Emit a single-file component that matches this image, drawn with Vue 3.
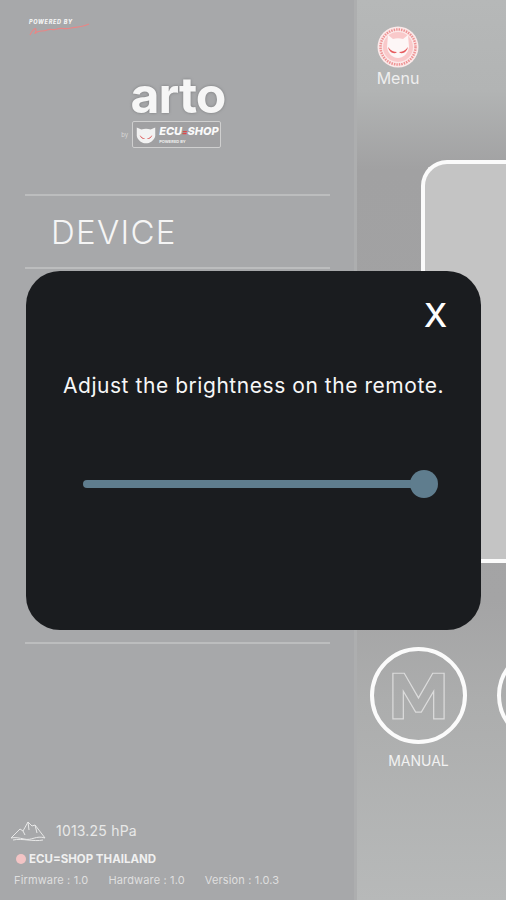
<script setup>
import { ref } from 'vue'

const brightness = ref(100)
const versions = [
  { label: 'Firmware', value: '1.0' },
  { label: 'Hardware', value: '1.0' },
  { label: 'Version', value: '1.0.3' }
]
</script>

<template>
  <div class="screen">
    <aside class="sidebar">
      <div class="powered">
        <span class="powered-text">POWERED BY</span>
        <svg class="signature" width="62" height="14" viewBox="0 0 62 14">
          <path d="M1 12 C4 6 7 4 7 7 C7 10 4 12 8 9 C12 7 14 9 18 7 C22 5 24 8 28 6 C32 4 36 7 42 5 C48 4 54 4 60 1" fill="none" stroke="#e88686" stroke-width="1.2" />
        </svg>
      </div>

      <div class="brand">
        <div class="arto">arto</div>
        <div class="shop-row">
          <span class="by">by</span>
          <div class="shop-logo">
            <svg width="24" height="21" viewBox="0 0 26 21">
              <path d="M3 3 L8 5 C11 4 15 4 18 5 L23 3 L23 12 C22 17 17 20 13 20 C9 20 4 17 3 12 Z" fill="#f2f2f2" />
              <path d="M6 11 C9 14 11 15 12 15 C10 16 7 14 6 11 Z M20 11 C17 14 15 15 14 15 C16 16 19 14 20 11 Z" fill="#d94b4b" />
            </svg>
            <div class="shop-words">
              <span class="shop-name">ECU<i>=</i>SHOP</span>
              <span class="shop-sub">POWERED BY</span>
            </div>
          </div>
        </div>
      </div>

      <nav class="menu-list">
        <div class="menu-row">DEVICE</div>
        <div class="menu-space"></div>
      </nav>

      <div class="info">
        <div class="pressure">
          <svg width="36" height="22" viewBox="0 0 36 22">
            <path d="M1 18 L10 9 L13 11 L18 2 L22 6 L25 5 L35 18 C26 15 22 21 14 19 C9 18 5 17 1 18 Z" fill="none" stroke="#e8e8e8" stroke-width="1" />
            <path d="M13 11 L15 15 M18 2 L19 10 M25 5 L27 13 M3 20 C12 18 24 22 33 20" fill="none" stroke="#e8e8e8" stroke-width="1" />
          </svg>
          <span>1013.25 hPa</span>
        </div>
        <div class="company">
          <span class="dot"></span>
          <span>ECU=SHOP THAILAND</span>
        </div>
        <div class="versions">
          <span v-for="v in versions" :key="v.label">{{ v.label }} : {{ v.value }}</span>
        </div>
      </div>
    </aside>

    <main class="content">
      <div class="menu-button">
        <svg class="menu-icon" width="42" height="42" viewBox="0 0 42 42">
          <circle cx="21" cy="21" r="20.5" fill="#fbe9e9" />
          <circle cx="21" cy="21" r="17.5" fill="none" stroke="#ee9394" stroke-width="2.5" stroke-dasharray="1.5 1" />
          <circle cx="21" cy="21" r="15" fill="#f9c9ca" />
          <path d="M11 9 L16 13 C19 12 23 12 26 13 L31 9 L32 21 C31 28 26 32 21 32 C16 32 11 28 10 21 Z" fill="#fdf6f6" />
          <path d="M11 21 C14 25 17 26 20 26 C17 29 12 26 11 21 Z M31 21 C28 25 25 26 22 26 C25 29 30 26 31 21 Z" fill="#e65c5e" />
        </svg>
        <span>Menu</span>
      </div>

      <div class="panel"></div>

      <div class="modes">
        <div class="mode">
          <div class="mode-circle">
            <svg width="55" height="50" viewBox="0 0 58 52">
              <path d="M2 2 H14 L29 28 L44 2 H56 V50 H45 V21 L32 43 H26 L13 21 V50 H2 Z" fill="none" stroke="#dcdcdc" stroke-width="1.3" />
            </svg>
          </div>
          <span>MANUAL</span>
        </div>
        <div class="mode">
          <div class="mode-circle"></div>
        </div>
      </div>
    </main>

    <div class="modal">
      <button class="close">X</button>
      <p class="message">Adjust the brightness on the remote.</p>
      <div class="slider">
        <div class="track"></div>
        <div class="thumb" :style="{ left: brightness + '%' }"></div>
      </div>
    </div>
  </div>
</template>

<style>
html, body {
  margin: 0;
  background: #a7a8aa;
}
</style>

<style scoped>
.screen {
  position: relative;
  display: flex;
  width: 506px;
  height: 900px;
  overflow: hidden;
  font-family: Inter, "Liberation Sans", sans-serif;
  color: #f4f4f4;
}

/* left side */
.sidebar {
  box-sizing: border-box;
  display: flex;
  flex-direction: column;
  flex: 0 0 354px;
  height: 900px;
  padding: 19px 24px 13px 25px;
  background: #a7a8aa;
}

.powered {
  display: flex;
  flex-direction: column;
  align-items: flex-start;
  height: 26px;
  margin-left: 4px;
}

.powered-text {
  font-size: 5.5px;
  line-height: 6px;
  font-weight: 800;
  font-style: italic;
  letter-spacing: 0.7px;
  color: #f5f5f5;
}

.signature {
  margin-top: -2px;
}

.brand {
  display: flex;
  flex-direction: column;
  align-items: center;
  margin-top: 27px;
  height: 122px;
  padding-left: 48px;
  width: 210px;
}

.arto {
  font-size: 50px;
  line-height: 46px;
  font-weight: 700;
  letter-spacing: -1px;
  color: #f6f6f6;
  text-shadow: 0 0 3px #77787a;
}

.shop-row {
  display: flex;
  align-items: center;
  gap: 4px;
  margin-top: 3px;
  margin-left: -14px;
}

.by {
  font-size: 6px;
  color: #d8d8d8;
}

.shop-logo {
  display: flex;
  align-items: center;
  gap: 1px;
  height: 25px;
  padding: 0 1px;
  background: #a0a0a2;
  border: 1px solid #cfcfcf;
  border-radius: 2px;
}

.shop-words {
  display: flex;
  flex-direction: column;
}

.shop-name {
  font-size: 11px;
  line-height: 13px;
  font-weight: 800;
  font-style: italic;
  color: #fafafa;
}

.shop-name i {
  color: #d94b4b;
  font-size: 8px;
}

.shop-sub {
  font-size: 4px;
  line-height: 5px;
  font-weight: 700;
  color: #efefef;
}

.menu-list {
  display: flex;
  flex-direction: column;
  width: 305px;
}

.menu-row {
  box-sizing: border-box;
  height: 73px;
  padding-left: 26px;
  font-size: 33px;
  line-height: 73px;
  font-weight: 300;
  letter-spacing: 1.3px;
  color: #f5f5f5;
  border-top: 2px solid #bcbdbe;
}

.menu-space {
  height: 373px;
  border-top: 2px solid #bcbdbe;
  border-bottom: 2px solid #bcbdbe;
}

.info {
  display: flex;
  flex-direction: column;
  margin-top: auto;
  margin-left: -15px;
  color: #e8e8e8;
}

.pressure {
  display: flex;
  align-items: center;
  gap: 10px;
  font-size: 14px;
  line-height: 22px;
  letter-spacing: 0.2px;
}

.company {
  display: flex;
  align-items: center;
  gap: 3px;
  margin-top: 10px;
  font-size: 11.5px;
  line-height: 14px;
  font-weight: 700;
  color: #f0f0f0;
  margin-left: 6px;
}

.dot {
  width: 10px;
  height: 10px;
  border-radius: 50%;
  background: #f3c4c5;
}

.versions {
  display: flex;
  gap: 20px;
  margin-top: 7px;
  margin-left: 4px;
  font-size: 11px;
  line-height: 14px;
  letter-spacing: 0.15px;
  color: #dfdfdf;
}

/* right side */
.content {
  display: flex;
  flex-direction: column;
  flex: 1;
  min-width: 0;
  height: 900px;
  background: linear-gradient(180deg, #b6b8b8 0, #b2b4b4 90px, #a1a1a2 170px, #a4a4a5 600px, #acadad 700px, #b7b9b9 900px);
  border-left: 3px solid #adaeaf;
}

.menu-button {
  display: flex;
  flex-direction: column;
  align-items: center;
  width: 82px;
  margin: 26px 0 0 0;
  font-size: 16px;
  line-height: 20px;
  color: #eeeeee;
}

.panel {
  box-sizing: border-box;
  flex: none;
  width: 160px;
  height: 403px;
  margin: 72px 0 0 64px;
  background: #c4c4c4;
  border: 4px solid #fbfbfb;
  border-right: none;
  border-radius: 26px 0 0 26px;
}

.modes {
  display: flex;
  gap: 30px;
  margin: 84px 0 0 13px;
}

.mode {
  display: flex;
  flex-direction: column;
  align-items: center;
  flex: none;
  font-size: 14px;
  line-height: 16px;
  color: #f2f2f2;
}

.mode-circle {
  box-sizing: border-box;
  display: flex;
  align-items: center;
  justify-content: center;
  width: 97px;
  height: 97px;
  margin-bottom: 9px;
  border: 4px solid #fbfbfb;
  border-radius: 50%;
}

/* brightness dialog */
.modal {
  position: absolute;
  left: 26px;
  top: 271px;
  box-sizing: border-box;
  display: flex;
  flex-direction: column;
  width: 455px;
  height: 359px;
  padding: 26px 37px 0;
  background: #1a1c1f;
  border-radius: 34px;
}

.close {
  align-self: flex-end;
  margin-right: -3px;
  padding: 0;
  background: none;
  border: none;
  font-family: Inter, "Liberation Sans", sans-serif;
  font-size: 33px;
  line-height: 37px;
  font-weight: 500;
  color: #ffffff;
}

.message {
  margin: 38px -20px 0;
  font-size: 21px;
  line-height: 28px;
  letter-spacing: 0.55px;
  text-align: center;
  white-space: nowrap;
  color: #f7f7f7;
}

.slider {
  position: relative;
  width: 341px;
  height: 28px;
  margin: 70px 0 0 20px;
}

.track {
  position: absolute;
  left: 0;
  right: 0;
  top: 10px;
  height: 8px;
  border-radius: 4px;
  background: #5f7d8e;
}

.thumb {
  position: absolute;
  top: 0;
  width: 28px;
  height: 28px;
  margin-left: -14px;
  border-radius: 50%;
  background: #5f7d8e;
}
</style>
